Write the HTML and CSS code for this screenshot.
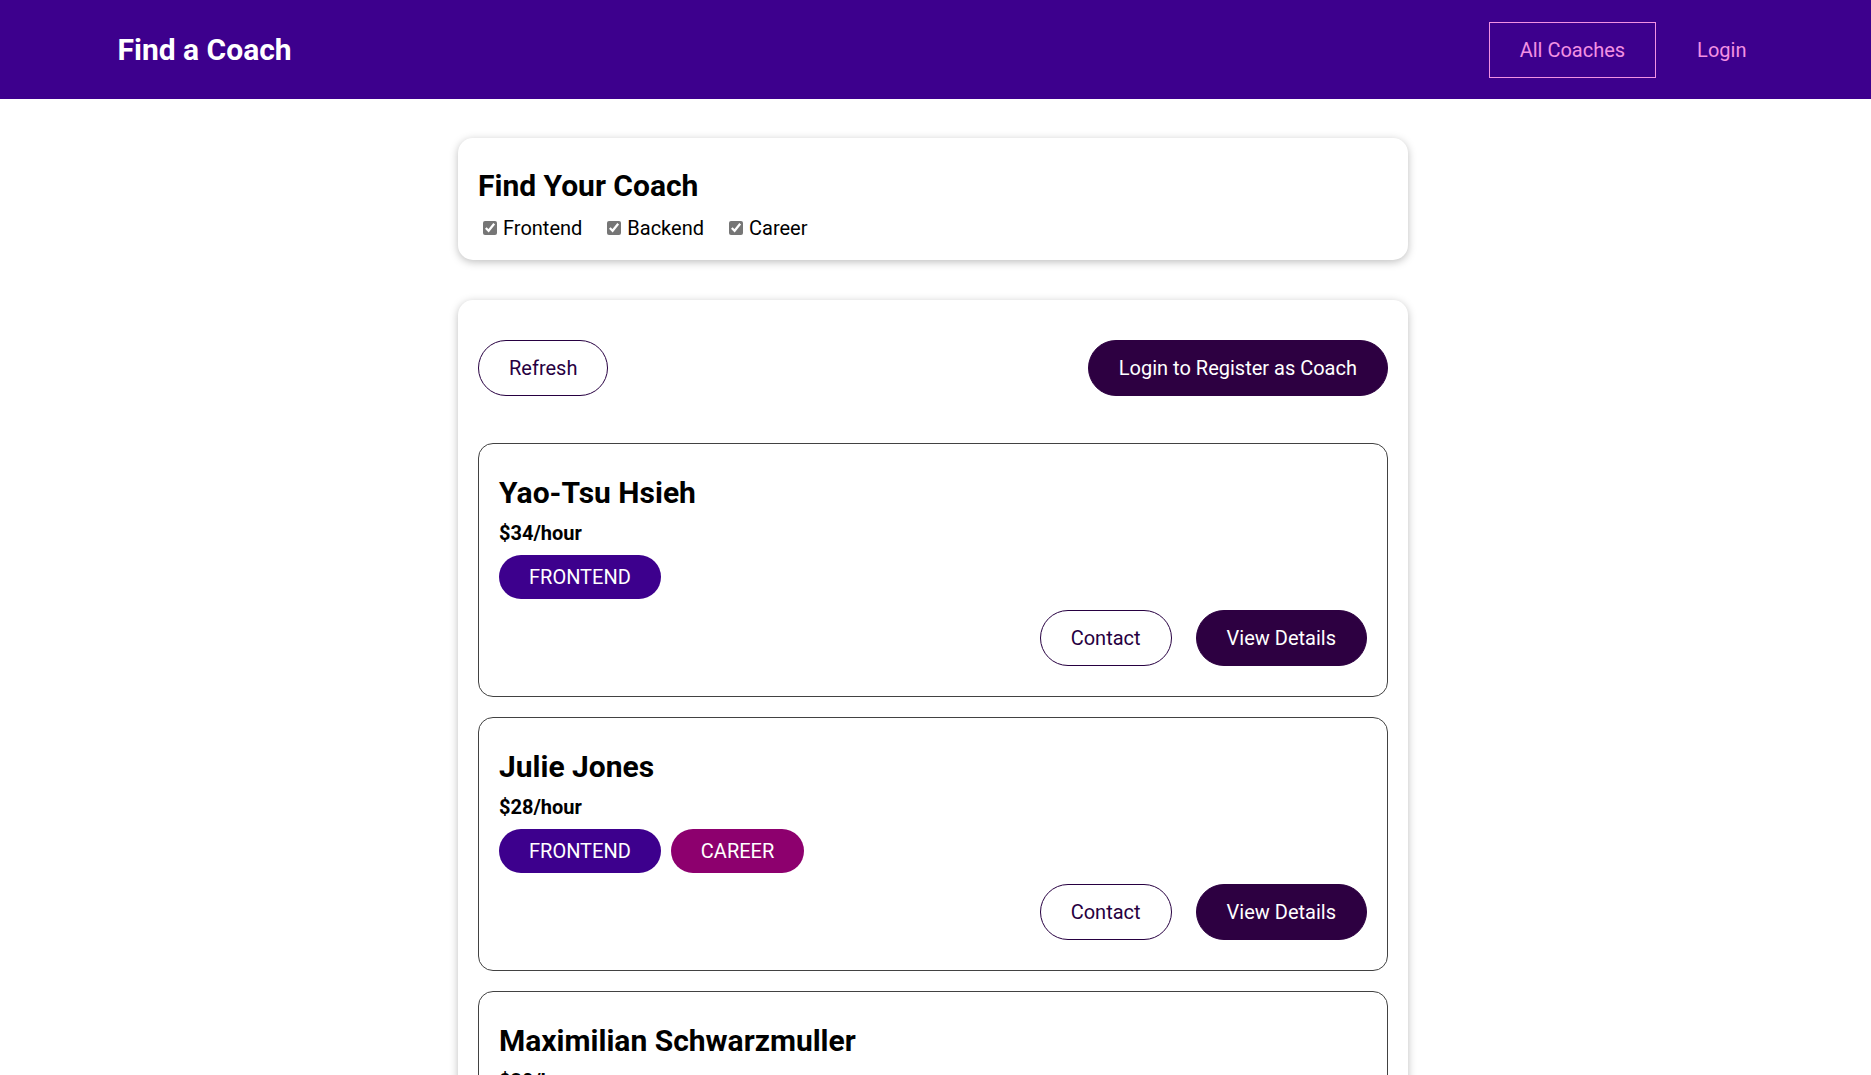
FILE: index.html
```html
<!DOCTYPE html>
<html lang="en">
<head>
<meta charset="utf-8">
<title>Find a Coach</title>
<link rel="stylesheet" href="styles.css">
</head>
<body>
<header class="topbar">
  <nav class="topnav">
    <h1 class="brand"><a href="#" class="brand-link">Find a Coach</a></h1>
    <ul class="navlist">
      <li><a href="#" class="navlink active">All Coaches</a></li>
      <li><a href="#" class="navlink">Login</a></li>
    </ul>
  </nav>
</header>
<main class="page">
  <section class="card">
    <h2 class="card-title">Find Your Coach</h2>
    <div class="filters">
      <span class="filter-option"><input type="checkbox" id="frontend" checked><label for="frontend">Frontend</label></span>
      <span class="filter-option"><input type="checkbox" id="backend" checked><label for="backend">Backend</label></span>
      <span class="filter-option"><input type="checkbox" id="career" checked><label for="career">Career</label></span>
    </div>
  </section>
  <section class="card">
    <div class="controls">
      <button class="btn btn-outline">Refresh</button>
      <a href="#" class="btn">Login to Register as Coach</a>
    </div>
    <ul class="coach-list">
      <li class="coach">
        <h3 class="coach-name">Yao-Tsu Hsieh</h3>
        <h4 class="coach-rate">$34/hour</h4>
        <div class="badges">
          <span class="badge frontend">FRONTEND</span>
        </div>
        <div class="actions">
          <a href="#" class="btn btn-outline">Contact</a>
          <a href="#" class="btn">View Details</a>
        </div>
      </li>
      <li class="coach">
        <h3 class="coach-name">Julie Jones</h3>
        <h4 class="coach-rate">$28/hour</h4>
        <div class="badges">
          <span class="badge frontend">FRONTEND</span><span class="badge career">CAREER</span>
        </div>
        <div class="actions">
          <a href="#" class="btn btn-outline">Contact</a>
          <a href="#" class="btn">View Details</a>
        </div>
      </li>
      <li class="coach">
        <h3 class="coach-name">Maximilian Schwarzmuller</h3>
        <h4 class="coach-rate">$30/hour</h4>
        <div class="badges">
          <span class="badge frontend">FRONTEND</span><span class="badge backend">BACKEND</span><span class="badge career">CAREER</span>
        </div>
        <div class="actions">
          <a href="#" class="btn btn-outline">Contact</a>
          <a href="#" class="btn">View Details</a>
        </div>
      </li>
    </ul>
  </section>
</main>
</body>
</html>
```

FILE: styles.css
```css
* {
  box-sizing: border-box;
}

html, body {
  margin: 0;
  padding: 0;
}

body {
  font-family: Roboto, "Liberation Sans", sans-serif;
  font-size: 20px;
  color: #000;
  background: #fff;
}

.topbar {
  height: 99px;
  background-color: #3d008d;
  display: flex;
  align-items: center;
}

.topnav {
  width: 90%;
  margin: 0 auto;
  display: flex;
  justify-content: space-between;
  align-items: center;
}

.brand {
  margin: 0;
  font-size: 30px;
  font-weight: 700;
  line-height: 35px;
}

.brand-link {
  color: #fff;
  text-decoration: none;
  padding: 0 24px;
  display: inline-block;
}

.navlist {
  list-style: none;
  margin: 0;
  padding: 0;
  display: flex;
  align-items: center;
  gap: 10px;
}

.navlink {
  display: inline-block;
  text-decoration: none;
  color: #f391e3;
  padding: 15px 30px;
  border: 1px solid transparent;
  line-height: 24px;
}

.navlink.active {
  border-color: #f391e3;
}

.page {
  padding: 1px 5px 1px 0;
}

.card {
  max-width: 950px;
  margin: 38px auto 40px;
  padding: 20px;
  border-radius: 15px;
  box-shadow: 0 2px 8px rgba(0, 0, 0, 0.26);
  background: #fff;
}

.card + .card {
  margin-top: 0;
}

.card-title {
  margin: 10px 0 13px;
  font-size: 30px;
  font-weight: 700;
  line-height: 35px;
}

.filters {
  display: flex;
  align-items: center;
  line-height: 24px;
}

.filter-option {
  display: inline-flex;
  align-items: center;
  margin-right: 20px;
}

.filter-option input {
  width: 14px;
  height: 14px;
  margin: 0 6px 0 5px;
  accent-color: #767676;
}

.controls {
  display: flex;
  justify-content: space-between;
  align-items: center;
  margin-top: 20px;
}

.btn {
  display: inline-block;
  text-decoration: none;
  font: inherit;
  line-height: 24px;
  padding: 15px 30px;
  border: 1px solid #2d0041;
  background-color: #2d0041;
  color: #fff;
  border-radius: 30px;
  cursor: pointer;
}

.btn-outline {
  background-color: transparent;
  border-color: #270041;
  color: #270041;
}

.coach-list {
  list-style: none;
  margin: 47px 0 0;
  padding: 0;
  display: flex;
  flex-direction: column;
  gap: 20px;
}

.coach {
  border: 1px solid #424242;
  border-radius: 15px;
  padding: 20px;
}

.coach-name {
  margin: 11px 0 10px;
  font-size: 30px;
  font-weight: 700;
  line-height: 35px;
}

.coach-rate {
  margin: 11px 0 10px;
  font-size: 20px;
  font-weight: 700;
  line-height: 24px;
}

.badges {
  margin: 10px 0;
  display: flex;
  gap: 10px;
}

.badge {
  display: inline-block;
  padding: 10px 30px;
  border-radius: 30px;
  line-height: 24px;
  color: #fff;
  background-color: #ccc;
}

.badge.frontend {
  background-color: #3d008d;
}

.badge.backend {
  background-color: #71008d;
}

.badge.career {
  background-color: #8d006e;
}

.actions {
  display: flex;
  justify-content: flex-end;
  gap: 24px;
  margin-top: 11px;
  margin-bottom: 10px;
}
```
